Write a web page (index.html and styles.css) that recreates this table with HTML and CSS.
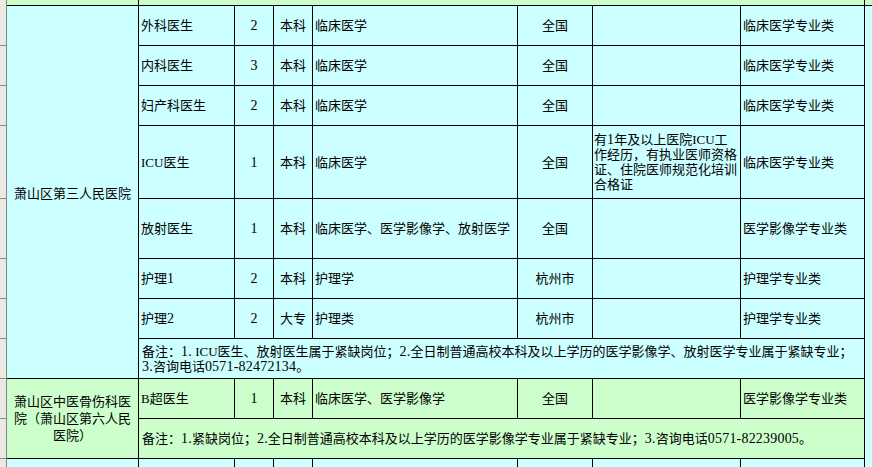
FILE: index.html
```html
<!DOCTYPE html>
<html lang="zh-CN">
<head>
<meta charset="utf-8">
<title>招聘岗位表</title>
<link rel="stylesheet" href="styles.css">
</head>
<body>
<div class="sheet">
  <div class="rowhead">
    <div class="rh rh-a"></div>
    <div class="rh rh-s"></div>
    <div class="rh rh-s"></div>
    <div class="rh rh-icu"></div>
    <div class="rh rh-fs"></div>
    <div class="rh rh-s"></div>
    <div class="rh rh-s"></div>
    <div class="rh rh-s"></div>
    <div class="rh rh-s"></div>
    <div class="rh rh-s"></div>
    <div class="rh rh-last"></div>
  </div>
  <div class="grid">
    <!-- top band (end of previous record) -->
    <div class="c g"></div>
    <div class="c g span7"></div>
    <div class="c g"></div>

    <!-- 萧山区第三人民医院 -->
    <div class="c hosp">萧山区第三人民医院</div>
    <div class="c l">外科医生</div>
    <div class="c ctr"><span class="n">2</span></div>
    <div class="c ctr">本科</div>
    <div class="c l">临床医学</div>
    <div class="c ctr">全国</div>
    <div class="c"></div>
    <div class="c l">临床医学专业类</div>
    <div class="c edge"></div>

    <div class="c l">内科医生</div>
    <div class="c ctr"><span class="n">3</span></div>
    <div class="c ctr">本科</div>
    <div class="c l">临床医学</div>
    <div class="c ctr">全国</div>
    <div class="c"></div>
    <div class="c l">临床医学专业类</div>

    <div class="c l">妇产科医生</div>
    <div class="c ctr"><span class="n">2</span></div>
    <div class="c ctr">本科</div>
    <div class="c l">临床医学</div>
    <div class="c ctr">全国</div>
    <div class="c"></div>
    <div class="c l">临床医学专业类</div>

    <div class="c l">ICU医生</div>
    <div class="c ctr"><span class="n">1</span></div>
    <div class="c ctr">本科</div>
    <div class="c l">临床医学</div>
    <div class="c ctr">全国</div>
    <div class="c l req"><span>有<span class="n">1</span>年及以上医院ICU工<br>作经历，有执业医师资格<br>证、住院医师规范化培训<br>合格证</span></div>
    <div class="c l">临床医学专业类</div>

    <div class="c l">放射医生</div>
    <div class="c ctr"><span class="n">1</span></div>
    <div class="c ctr">本科</div>
    <div class="c l">临床医学、医学影像学、放射医学</div>
    <div class="c ctr">全国</div>
    <div class="c"></div>
    <div class="c l">医学影像学专业类</div>

    <div class="c l">护理<span class="n">1</span></div>
    <div class="c ctr"><span class="n">2</span></div>
    <div class="c ctr">本科</div>
    <div class="c l">护理学</div>
    <div class="c ctr">杭州市</div>
    <div class="c"></div>
    <div class="c l">护理学专业类</div>

    <div class="c l">护理<span class="n">2</span></div>
    <div class="c ctr"><span class="n">2</span></div>
    <div class="c ctr">大专</div>
    <div class="c l">护理类</div>
    <div class="c ctr">杭州市</div>
    <div class="c"></div>
    <div class="c l">护理学专业类</div>

    <div class="c note span7"><span>备注：<span class="n">1.</span> ICU医生、放射医生属于紧缺岗位；<span class="n">2.</span>全日制普通高校本科及以上学历的医学影像学、放射医学专业属于紧缺专业；<br><span class="n">3.</span>咨询电话<span class="n">0571-82472134</span>。</span></div>

    <!-- 萧山区中医骨伤科医院 -->
    <div class="c g hosp2"><span>萧山区中医骨伤科医<br>院（萧山区第六人民<br>医院）</span></div>
    <div class="c g l">B超医生</div>
    <div class="c g ctr"><span class="n">1</span></div>
    <div class="c g ctr">本科</div>
    <div class="c g l">临床医学、医学影像学</div>
    <div class="c g ctr">全国</div>
    <div class="c g"></div>
    <div class="c g l">医学影像学专业类</div>

    <div class="c g note span7">备注：<span class="n">1.</span>紧缺岗位；<span class="n">2.</span>全日制普通高校本科及以上学历的医学影像学专业属于紧缺专业；<span class="n">3.</span>咨询电话<span class="n">0571-82239005</span>。</div>

    <!-- next record (partially visible) -->
    <div class="c"></div>
    <div class="c"></div>
    <div class="c"></div>
    <div class="c"></div>
    <div class="c"></div>
    <div class="c"></div>
    <div class="c"></div>
    <div class="c"></div>
  </div>
</div>
</body>
</html>
```

FILE: styles.css
```css
html, body {
  margin: 0;
  padding: 0;
  width: 872px;
  height: 467px;
  overflow: hidden;
  background: #ccffff;
}

body {
  font-family: "Liberation Serif", "Noto Sans CJK SC", sans-serif;
  font-size: 13px;
  color: #000;
}

.sheet {
  display: flex;
  align-items: flex-start;
}

.rowhead {
  width: 6px;
  height: 467px;
  flex: none;
  background: #ece8e2;
  border-right: 1px solid #858585;
  display: flex;
  flex-direction: column;
}

.rh {
  flex: none;
  border-bottom: 1px solid #8a8a8a;
}
.rh-a { height: 45px; }
.rh-s { height: 39px; }
.rh-icu { height: 72px; }
.rh-fs { height: 59px; }
.rh-last { height: 30px; border-bottom: none; }

.grid {
  flex: 1;
  display: grid;
  grid-template-columns: 131px 95px 38px 38px 204px 74px 147px 123px 7px;
  grid-template-rows: 5px 39px 39px 39px 72px 59px 39px 39px 39px 39px 39px 30px;
  gap: 1px;
  background: #000;
}

.c {
  background: #ccffff;
  display: flex;
  align-items: center;
  line-height: 15px;
  white-space: nowrap;
  overflow: hidden;
}

.c.g {
  background: #ccffcc;
}

.n {
  font-size: 14px;
  letter-spacing: 0.2px;
}

.l {
  justify-content: flex-start;
  padding-left: 2px;
}

.ctr {
  justify-content: center;
}

.req {
  padding-left: 1px;
}

.note {
  padding-left: 3px;
  justify-content: flex-start;
}

.span7 {
  grid-column: span 7;
}

.hosp {
  grid-row: span 8;
  justify-content: center;
  padding-top: 2px;
}

.hosp2 {
  grid-row: span 2;
  justify-content: center;
  text-align: center;
  line-height: 17px;
}

.edge {
  grid-row: span 11;
}
```
